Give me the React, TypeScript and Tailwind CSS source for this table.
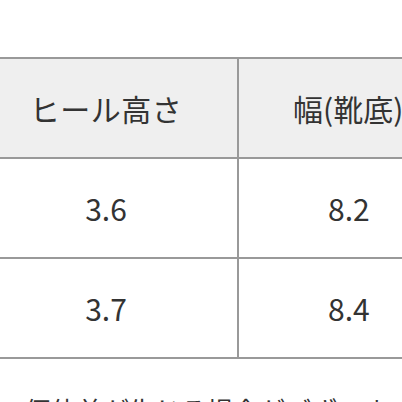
export default function App() {
  const rows = [
    ["3.6", "8.2"],
    ["3.7", "8.4"],
  ];

  return (
    <div
      className="w-[402px] h-[402px] overflow-hidden bg-white text-[#333]"
      style={{ fontFamily: '"Noto Sans CJK JP", "Noto Sans", sans-serif' }}
    >
      <div className="pt-[57px]">
        <table className="ml-[-25px] border-collapse table-fixed w-[500px]">
          <colgroup>
            <col className="w-[263px]" />
            <col className="w-[237px]" />
          </colgroup>
          <thead>
            <tr className="bg-[#efefef]">
              <th className="h-[100px] border-y-2 border-r-2 border-[#999] text-[30px] font-normal tracking-[0.5px] text-center">
                ヒール高さ
              </th>
              <th className="h-[100px] border-y-2 border-[#999] text-[30px] font-normal text-left pl-[54px]">
                幅(靴底)
              </th>
            </tr>
          </thead>
          <tbody>
            {rows.map((r) => (
              <tr key={r[0]}>
                <td className="h-[100px] border-b-2 border-r-2 border-[#999] text-[30px] text-center">
                  {r[0]}
                </td>
                <td className="h-[100px] border-b-2 border-[#999] text-[30px] text-left pl-[89px]">
                  {r[1]}
                </td>
              </tr>
            ))}
          </tbody>
        </table>
        <p className="mt-[33px] pl-[25px] text-[26px] leading-[1.4] whitespace-nowrap">
          個体差が生じる場合がございます。
        </p>
      </div>
    </div>
  );
}
